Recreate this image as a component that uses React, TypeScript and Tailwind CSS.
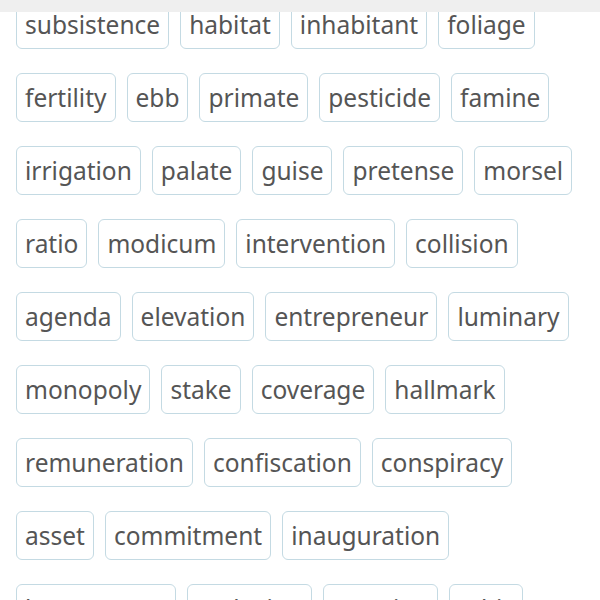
import React from "react";

const rows: string[][] = [
  ["subsistence", "habitat", "inhabitant", "foliage"],
  ["fertility", "ebb", "primate", "pesticide", "famine"],
  ["irrigation", "palate", "guise", "pretense", "morsel"],
  ["ratio", "modicum", "intervention", "collision"],
  ["agenda", "elevation", "entrepreneur", "luminary"],
  ["monopoly", "stake", "coverage", "hallmark"],
  ["remuneration", "confiscation", "conspiracy"],
  ["asset", "commitment", "inauguration"],
  ["bureaucracy", "seclusion", "sanction", "ethic"],
];

export default function App() {
  return (
    <div className="relative w-[600px] h-[600px] overflow-hidden bg-white" style={{ fontFamily: '"Noto Sans", sans-serif' }}>
      <div className="flex flex-col gap-y-[24px] pl-[16px] pr-[16px]">
        {rows.map((row, i) => (
          <div key={i} className="flex gap-x-[11px]">
            {row.map((w) => (
              <div
                key={w}
                className="h-[49px] flex items-center px-[8px] pt-[2px] border border-[#c4dae3] rounded-[6px] text-[24.5px] text-[#555555] leading-none whitespace-nowrap"
              >
                {w}
              </div>
            ))}
          </div>
        ))}
      </div>
      <div className="absolute top-0 left-0 right-0 h-[12px] bg-[#efefef]" />
    </div>
  );
}
